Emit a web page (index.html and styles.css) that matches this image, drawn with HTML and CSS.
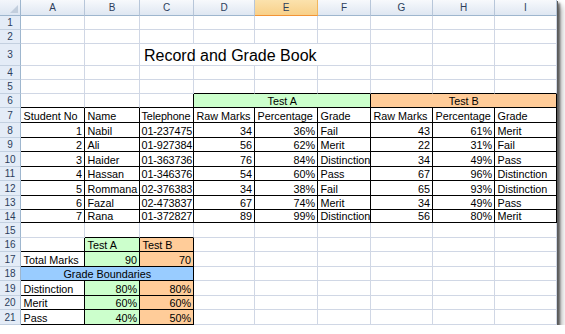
FILE: index.html
```html
<!DOCTYPE html>
<html>
<head>
<meta charset="utf-8">
<link rel="stylesheet" href="styles.css">
</head>
<body>
<div class="sheet">
  <div class="corner"></div>
  <div class="hc">A</div><div class="hc">B</div><div class="hc">C</div><div class="hc">D</div><div class="hc sel">E</div><div class="hc">F</div><div class="hc">G</div><div class="hc">H</div><div class="hc">I</div>

  <div class="rh">1</div><div class="c"></div><div class="c"></div><div class="c"></div><div class="c"></div><div class="c"></div><div class="c"></div><div class="c"></div><div class="c"></div><div class="c"></div>
  <div class="rh">2</div><div class="c"></div><div class="c"></div><div class="c"></div><div class="c"></div><div class="c"></div><div class="c"></div><div class="c"></div><div class="c"></div><div class="c"></div>
  <div class="rh">3</div><div class="c"></div><div class="c"></div><div class="c title s4">Record and Grade Book</div><div class="c"></div><div class="c"></div><div class="c"></div>
  <div class="rh">4</div><div class="c"></div><div class="c"></div><div class="c"></div><div class="c"></div><div class="c"></div><div class="c"></div><div class="c"></div><div class="c"></div><div class="c"></div>
  <div class="rh">5</div><div class="c"></div><div class="c"></div><div class="c"></div><div class="c bb"></div><div class="c bb"></div><div class="c bb"></div><div class="c bb"></div><div class="c bb"></div><div class="c bb"></div>
  <div class="rh">6</div><div class="c bb"></div><div class="c bb"></div><div class="c bb br"></div><div class="c bx g ctr s3">Test A</div><div class="c bx o ctr s3">Test B</div>

  <div class="rh">7</div><div class="c bx">Student No</div><div class="c bx">Name</div><div class="c bx t">Telephone</div><div class="c bx">Raw Marks</div><div class="c bx">Percentage</div><div class="c bx">Grade</div><div class="c bx">Raw Marks</div><div class="c bx">Percentage</div><div class="c bx">Grade</div>
  <div class="rh">8</div><div class="c bx r">1</div><div class="c bx">Nabil</div><div class="c bx t">01-237475</div><div class="c bx r">34</div><div class="c bx r">36%</div><div class="c bx">Fail</div><div class="c bx r">43</div><div class="c bx r">61%</div><div class="c bx">Merit</div>
  <div class="rh">9</div><div class="c bx r">2</div><div class="c bx">Ali</div><div class="c bx t">01-927384</div><div class="c bx r">56</div><div class="c bx r">62%</div><div class="c bx">Merit</div><div class="c bx r">22</div><div class="c bx r">31%</div><div class="c bx">Fail</div>
  <div class="rh">10</div><div class="c bx r">3</div><div class="c bx">Haider</div><div class="c bx t">01-363736</div><div class="c bx r">76</div><div class="c bx r">84%</div><div class="c bx">Distinction</div><div class="c bx r">34</div><div class="c bx r">49%</div><div class="c bx">Pass</div>
  <div class="rh">11</div><div class="c bx r">4</div><div class="c bx">Hassan</div><div class="c bx t">01-346376</div><div class="c bx r">54</div><div class="c bx r">60%</div><div class="c bx">Pass</div><div class="c bx r">67</div><div class="c bx r">96%</div><div class="c bx">Distinction</div>
  <div class="rh">12</div><div class="c bx r">5</div><div class="c bx">Rommana</div><div class="c bx t">02-376383</div><div class="c bx r">34</div><div class="c bx r">38%</div><div class="c bx">Fail</div><div class="c bx r">65</div><div class="c bx r">93%</div><div class="c bx">Distinction</div>
  <div class="rh">13</div><div class="c bx r">6</div><div class="c bx">Fazal</div><div class="c bx t">02-473837</div><div class="c bx r">67</div><div class="c bx r">74%</div><div class="c bx">Merit</div><div class="c bx r">34</div><div class="c bx r">49%</div><div class="c bx">Pass</div>
  <div class="rh">14</div><div class="c bx r">7</div><div class="c bx">Rana</div><div class="c bx t">01-372827</div><div class="c bx r">89</div><div class="c bx r">99%</div><div class="c bx">Distinction</div><div class="c bx r">56</div><div class="c bx r">80%</div><div class="c bx">Merit</div>

  <div class="rh">15</div><div class="c"></div><div class="c bb"></div><div class="c bb"></div><div class="c"></div><div class="c"></div><div class="c"></div><div class="c"></div><div class="c"></div><div class="c"></div>
  <div class="rh">16</div><div class="c bb br"></div><div class="c bx g">Test A</div><div class="c bx o">Test B</div><div class="c"></div><div class="c"></div><div class="c"></div><div class="c"></div><div class="c"></div><div class="c"></div>
  <div class="rh">17</div><div class="c bx">Total Marks</div><div class="c bx g r">90</div><div class="c bx o r">70</div><div class="c"></div><div class="c"></div><div class="c"></div><div class="c"></div><div class="c"></div><div class="c"></div>
  <div class="rh">18</div><div class="c bx bl ctr s3">Grade Boundaries</div><div class="c"></div><div class="c"></div><div class="c"></div><div class="c"></div><div class="c"></div><div class="c"></div>
  <div class="rh">19</div><div class="c bx">Distinction</div><div class="c bx g r">80%</div><div class="c bx o r">80%</div><div class="c"></div><div class="c"></div><div class="c"></div><div class="c"></div><div class="c"></div><div class="c"></div>
  <div class="rh">20</div><div class="c bx">Merit</div><div class="c bx g r">60%</div><div class="c bx o r">60%</div><div class="c"></div><div class="c"></div><div class="c"></div><div class="c"></div><div class="c"></div><div class="c"></div>
  <div class="rh">21</div><div class="c bx">Pass</div><div class="c bx g r">40%</div><div class="c bx o r">50%</div><div class="c"></div><div class="c"></div><div class="c"></div><div class="c"></div><div class="c"></div><div class="c"></div>
</div>
</body>
</html>
```

FILE: styles.css
```css
html, body {
  margin: 0;
  padding: 0;
  background: #ffffff;
}

.sheet {
  width: 557px;
  height: 325px;
  display: grid;
  grid-template-columns: 21px 64px 55px 54px 61px 63px 53px 62px 62px 62px;
  grid-template-rows: 16px 14px 14px 22px 14px 14px 14px 15px 15px 14px 15px 14px 15px 14px 13px 15px 14px 15px 14px 15px 14px 15px;
  background: #ffffff;
  font-family: "Liberation Sans", Arial, sans-serif;
  font-size: 10.8px;
  color: #000;
  box-shadow: 1px 1px 0 #5a5a5a, 3px 3px 2px rgba(0,0,0,0.5), 5px 6px 6px rgba(0,0,0,0.3);
}

.corner {
  position: relative;
  box-sizing: border-box;
  background: linear-gradient(#f3f6fb, #dde6f2);
  border-right: 1px solid #9eb6ce;
  border-bottom: 1px solid #9eb6ce;
}
.corner::after {
  content: "";
  position: absolute;
  right: 2px;
  bottom: 2px;
  width: 0;
  height: 0;
  border-left: 8px solid transparent;
  border-bottom: 8px solid #c2cedd;
}

.hc {
  box-sizing: border-box;
  display: flex;
  align-items: center;
  justify-content: center;
  font-size: 10px;
  color: #2c3e5c;
  background: linear-gradient(#f7f9fc, #dfe7f2);
  border-right: 1px solid #b7c6d9;
  border-bottom: 1px solid #9eb6ce;
}
.hc.sel {
  background: linear-gradient(#fbe2ad, #f8d089);
  border-right: 1px solid #f2b65b;
  border-bottom: 1px solid #f29436;
}

.rh {
  box-sizing: border-box;
  display: flex;
  align-items: center;
  justify-content: center;
  font-size: 10px;
  color: #2c3e5c;
  background: #e4ecf7;
  border-right: 1px solid #9eb6ce;
  border-bottom: 1px solid #c3d0e0;
}

.c {
  box-sizing: border-box;
  display: flex;
  align-items: flex-end;
  padding: 0 2px 0 2.5px;
  line-height: 12px;
  white-space: nowrap;
  border-right: 1px solid #d0d7e5;
  border-bottom: 1px solid #d0d7e5;
}

.t {
  padding-left: 1.5px;
  letter-spacing: -0.1px;
}

.bx {
  border-right-color: #000;
  border-bottom-color: #000;
}
.bb { border-bottom-color: #000; }
.br { border-right-color: #000; }

.r { justify-content: flex-end; }
.ctr { justify-content: center; }

.g { background: #ccffcc; }
.o { background: #ffcc99; }
.bl { background: #99ccff; }

.s3 { grid-column: span 3; }
.s4 { grid-column: span 4; }

.title {
  font-size: 16px;
  line-height: 18px;
  padding-left: 4px;
}
```
